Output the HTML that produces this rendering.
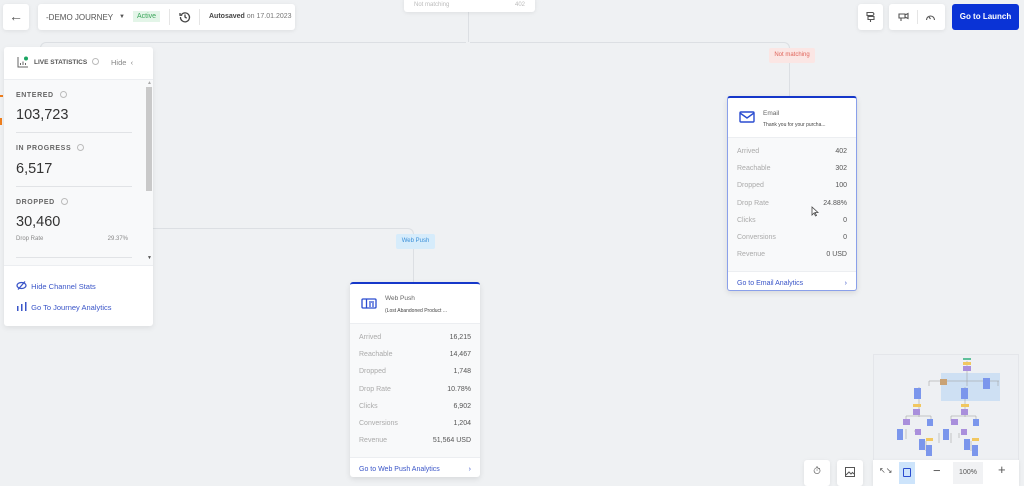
<!DOCTYPE html>
<html><head><meta charset="utf-8"><style>
*{box-sizing:border-box;margin:0;padding:0}
body{width:1024px;height:483px;overflow:hidden;background:#eff1f3;font-family:"Liberation Sans",sans-serif;position:relative;color:#333}
.a{position:absolute}
.w{background:#fff;border-radius:3px;box-shadow:0 1px 4px rgba(0,0,0,.08)}
.ln{position:absolute;border-color:#dcdfe3;border-style:solid;border-width:0}
.card{position:absolute;background:#fff;border-radius:3px;box-shadow:0 2px 6px rgba(0,0,0,.1);border-top:2px solid #1537c9}
.card .hd{height:40px;position:relative;border-bottom:1px solid #eceef1}
.card .rows{background:#f8f9fa;padding:5px 9px 0 9px;border-bottom:1px solid #eceef1}
.card .r{display:flex;justify-content:space-between;height:17.2px;font-size:7px;color:#aaa;align-items:center}
.card .r b{font-weight:normal;color:#555}
.card .ft{height:22px;font-size:7px;color:#3a55c8;padding:0 9px;display:flex;justify-content:space-between;align-items:center}
.lab{position:absolute;left:12px;font-size:7px;font-weight:bold;color:#666;letter-spacing:.6px;white-space:nowrap}
.num{position:absolute;left:12px;font-size:14.5px;color:#333}
.dv{position:absolute;left:12px;width:116px;border-top:1px solid #e1e3e6}
.q{display:inline-block;width:7px;height:7px;border:1px solid #bbb;border-radius:50%;margin-left:6px;vertical-align:-1px}
</style></head><body>

<div class="ln" style="left:40px;top:42px;width:426px;border-top-width:1px;border-left-width:1px;border-radius:6px 0 0 0;height:10px"></div>
<div class="ln" style="left:468px;top:12px;height:30px;border-left-width:1px"></div>
<div class="ln" style="left:470px;top:42px;width:320px;height:54px;border-top-width:1px;border-right-width:1px;border-radius:0 6px 0 0"></div>
<div class="ln" style="left:153px;top:228px;width:261px;height:54px;border-top-width:1px;border-right-width:1px;border-radius:0 6px 0 0"></div>

<div class="a w" style="left:404px;top:-4px;width:131px;height:16px;font-size:6px;color:#bbb;padding:6px 10px">Not matching<span style="float:right">402</span></div>

<div class="a w" style="left:3px;top:4px;width:26px;height:26px;font-size:14px;color:#555;text-align:center;line-height:24px">&#8592;</div>
<div class="a w" style="left:38px;top:4px;width:257px;height:26px;font-size:8px;color:#555">
 <span class="a" style="left:8px;top:9px">-DEMO JOURNEY</span>
 <span class="a" style="left:81px;top:10px;font-size:6px">&#9660;</span>
 <span class="a" style="left:95px;top:7px;background:#e3f5e8;color:#3aa55a;font-size:7px;padding:2px 4px">Active</span>
 <span class="a" style="left:131px;top:5px;height:16px;border-left:1px solid #e5e5e5"></span>
 <svg class="a" style="left:141px;top:7px" width="12" height="12" viewBox="0 0 12 12" fill="none" stroke="#444" stroke-width="1.3"><path d="M2.5 3.5A4.5 4.5 0 1 1 1.5 6"/><path d="M1 2v2.2h2.2"/><path d="M6 3.5V6l1.7 1.2"/></svg>
 <span class="a" style="left:161px;top:5px;height:16px;border-left:1px solid #e5e5e5"></span>
 <span class="a" style="left:171px;top:9px;font-size:7px;color:#444"><b>Autosaved</b> <span style="color:#777">on 17.01.2023</span></span>
</div>

<div class="a w" style="left:858px;top:4px;width:25px;height:26px"><svg class="a" style="left:7px;top:7px" width="11" height="12" viewBox="0 0 11 12" fill="none" stroke="#555" stroke-width="1.1"><path d="M2 1.5h6l1 1.5-1 1.5H2zM3 5.5h6v3H3zM5.5 8.5V11"/></svg></div>
<div class="a w" style="left:889px;top:4px;width:56px;height:26px"><span class="a" style="left:28px;top:6px;height:14px;border-left:1px solid #e5e5e5"></span>
<svg class="a" style="left:9px;top:8px" width="11" height="10" viewBox="0 0 11 10" fill="none" stroke="#555" stroke-width="1.1"><path d="M1 2h6v4H1zM7 3l3-1.5v5L7 5M3 6v3"/></svg>
<svg class="a" style="left:36px;top:8px" width="11" height="10" viewBox="0 0 11 10" fill="none" stroke="#555" stroke-width="1.1"><path d="M1.5 8A4 4 0 1 1 9.5 8M5.5 7l-1.5-2"/></svg></div>
<div class="a" style="left:952px;top:4px;width:67px;height:26px;background:#0a33d6;border-radius:3px;color:#fff;font-size:8px;font-weight:bold;text-align:center;line-height:26px">Go to Launch</div>

<div class="a" style="left:769px;top:48px;width:46px;height:15px;background:#fbe6e4;color:#e0645a;font-size:6px;text-align:center;line-height:15px;border-radius:2px">Not matching</div>
<div class="a" style="left:396px;top:234px;width:39px;height:15px;background:#d6ecfb;color:#3a8fd8;font-size:6px;text-align:center;line-height:15px;border-radius:2px">Web Push</div>

<div class="a" style="left:0;top:95px;width:3px;height:2px;background:#f07f1e"></div>
<div class="a" style="left:0;top:118px;width:2px;height:7px;background:#f07f1e"></div>

<!-- live stats panel -->
<div class="a" style="left:4px;top:47px;width:149px;height:279px;background:#fff;border-radius:3px;box-shadow:0 2px 6px rgba(0,0,0,.08)">
 <svg class="a" style="left:13px;top:9px" width="12" height="12" viewBox="0 0 12 12" fill="none" stroke="#666" stroke-width="1"><path d="M1 1v10h10M3.5 9V7M6 9V5.5M8.5 9V7"/><circle cx="9" cy="2.5" r="2" fill="#1aa562" stroke="none"/></svg>
 <span class="a" style="left:30px;top:12px;font-size:6.5px;font-weight:bold;color:#555;white-space:nowrap">LIVE STATISTICS</span>
 <span class="a" style="left:88px;top:11px;width:7px;height:7px;border:1px solid #bbb;border-radius:50%"></span>
 <span class="a" style="left:107px;top:11px;font-size:7.5px;color:#888;white-space:nowrap">Hide &nbsp;&#8249;</span>
 <div class="a" style="left:0;top:32px;width:149px;height:187px;background:#f8f9fa;border-top:1px solid #eceef1;border-bottom:1px solid #eceef1"></div>
 <div class="a" style="left:142px;top:40px;width:6px;height:104px;background:#c9c9c9"></div>
 <div class="a" style="left:143px;top:208px;font-size:5px;color:#555">&#9660;</div>
 <div class="a" style="left:143px;top:33px;font-size:5px;color:#aaa">&#9650;</div>
 <div class="lab" style="top:44px">ENTERED<span class="q"></span></div>
 <div class="num" style="top:60px">103,723</div>
 <div class="dv" style="top:85px"></div>
 <div class="lab" style="top:97px">IN PROGRESS<span class="q"></span></div>
 <div class="num" style="top:114px">6,517</div>
 <div class="dv" style="top:139px"></div>
 <div class="lab" style="top:151px">DROPPED<span class="q"></span></div>
 <div class="num" style="top:167px">30,460</div>
 <div class="a" style="left:12px;top:189px;font-size:6px;color:#888;width:112px;display:flex;justify-content:space-between">Drop Rate<span>29.37%</span></div>
 <div class="dv" style="top:210px"></div>
 <div class="a" style="left:12px;top:234px;font-size:7.5px;color:#3a55c8;white-space:nowrap"><svg width="11" height="9" viewBox="0 0 11 9" fill="none" stroke="#3a55c8" stroke-width="1.3" style="vertical-align:-1px"><ellipse cx="5.5" cy="4.5" rx="4.5" ry="3"/><path d="M2 8.5L9 .5"/></svg> &nbsp;Hide Channel Stats</div>
 <div class="a" style="left:12px;top:255px;font-size:7.5px;color:#3a55c8;white-space:nowrap"><svg width="11" height="9" viewBox="0 0 11 9" fill="#3a55c8" style="vertical-align:-1px"><rect x="1" y="4" width="1.5" height="5"/><rect x="5" y="2" width="1.5" height="7"/><rect x="9" y="0" width="1.5" height="9"/></svg> &nbsp;Go To Journey Analytics</div>
</div>

<!-- email card -->
<div class="card" style="left:727px;top:96px;width:130px;height:195px;border:1px solid #8aa0ea;border-top:2px solid #1537c9">
 <div class="hd">
  <svg class="a" style="left:11px;top:13px" width="16" height="12" viewBox="0 0 16 12" fill="none" stroke="#2a4cd0" stroke-width="1.4"><rect x="1" y="1" width="14" height="10" rx="1"/><path d="M1 2l7 5 7-5"/></svg>
  <span class="a" style="left:35px;top:12px;font-size:6.5px;color:#666">Email</span>
  <span class="a" style="left:35px;top:24px;font-size:5px;color:#444;white-space:nowrap">Thank you for your purcha...</span>
 </div>
 <div class="rows" style="height:134px">
  <div class="r">Arrived<b>402</b></div><div class="r">Reachable<b>302</b></div><div class="r">Dropped<b>100</b></div><div class="r">Drop Rate<b>24.88%</b></div><div class="r">Clicks<b>0</b></div><div class="r">Conversions<b>0</b></div><div class="r">Revenue<b>0 USD</b></div>
 </div>
 <div class="ft">Go to Email Analytics<span>&#8250;</span></div>
</div>
<svg class="a" style="left:811px;top:206px" width="8" height="11" viewBox="0 0 8 11"><path d="M1 1v8l2-2 1.5 3 1-.5L4 6.5h3z" fill="#fff" stroke="#444" stroke-width=".8"/></svg>

<!-- web push card -->
<div class="card" style="left:350px;top:282px;width:130px;height:195px">
 <div class="hd">
  <svg class="a" style="left:11px;top:14px" width="16" height="11" viewBox="0 0 16 11" fill="none" stroke="#2a4cd0" stroke-width="1.3"><rect x="1" y="1" width="14" height="9" rx="1"/><path d="M5.5 1v9M8 4h5M8 6h2M11 6h2M8 8h2M11 8h2"/></svg>
  <span class="a" style="left:35px;top:11px;font-size:6.5px;color:#666">Web Push</span>
  <span class="a" style="left:35px;top:24px;font-size:5px;color:#444;white-space:nowrap">(Lost Abandoned Product ...</span>
 </div>
 <div class="rows" style="height:134px">
  <div class="r">Arrived<b>16,215</b></div><div class="r">Reachable<b>14,467</b></div><div class="r">Dropped<b>1,748</b></div><div class="r">Drop Rate<b>10.78%</b></div><div class="r">Clicks<b>6,902</b></div><div class="r">Conversions<b>1,204</b></div><div class="r">Revenue<b>51,564 USD</b></div>
 </div>
 <div class="ft">Go to Web Push Analytics<span>&#8250;</span></div>
</div>

<!-- minimap -->
<div class="a" style="left:873px;top:354px;width:146px;height:107px;background:#eef0f3;border:1px solid #e4e6ea">
 <svg width="146" height="107" viewBox="873 354 146 107">
  <rect x="940" y="372" width="59" height="28" fill="#c6dcf3" opacity=".8"/>
  <g stroke="#999" stroke-width=".5" fill="none">
   <path d="M966 360v20M928 380h70M928 380v5M966 380v5M997 380v5M918 386v30M964 386v30M905 415h25M950 415h25M905 415v5M930 415v5M950 415v5M975 415v5M905 428v10M913 430h5M938 432v10M950 432v10M958 432v5M925 440v10M970 440v10"/>
  </g>
  <rect x="962" y="357" width="8" height="2" fill="#5fc09a"/>
  <rect x="962" y="361" width="8" height="3" fill="#f1c760"/>
  <rect x="962" y="365" width="8" height="5" fill="#a98fdc"/>
  <rect x="939" y="378" width="7" height="6" fill="#c9a275"/>
  <rect x="982" y="377" width="7" height="11" fill="#7b96ec"/>
  <rect x="913" y="387" width="7" height="11" fill="#7b96ec"/>
  <rect x="960" y="387" width="7" height="11" fill="#7b96ec"/>
  <rect x="912" y="403" width="8" height="3" fill="#f1c760"/><rect x="960" y="403" width="8" height="3" fill="#f1c760"/>
  <rect x="912" y="408" width="7" height="6" fill="#a98fdc"/><rect x="960" y="408" width="7" height="6" fill="#a98fdc"/>
  <rect x="902" y="418" width="7" height="6" fill="#a98fdc"/><rect x="926" y="418" width="6" height="7" fill="#7b96ec"/>
  <rect x="950" y="418" width="7" height="6" fill="#a98fdc"/><rect x="972" y="418" width="6" height="7" fill="#7b96ec"/>
  <rect x="896" y="428" width="6" height="11" fill="#7b96ec"/><rect x="914" y="428" width="6" height="6" fill="#a98fdc"/>
  <rect x="942" y="428" width="6" height="11" fill="#7b96ec"/><rect x="960" y="428" width="6" height="6" fill="#a98fdc"/>
  <rect x="918" y="438" width="6" height="11" fill="#7b96ec"/><rect x="925" y="437" width="7" height="3" fill="#f1c760"/>
  <rect x="963" y="438" width="6" height="11" fill="#7b96ec"/><rect x="971" y="437" width="7" height="3" fill="#f1c760"/>
  <rect x="925" y="444" width="6" height="11" fill="#7b96ec"/><rect x="971" y="444" width="6" height="11" fill="#7b96ec"/>
 </svg>
</div>
<div class="a w" style="left:804px;top:460px;width:26px;height:26px;font-size:10px;text-align:center;line-height:24px;color:#444">&#9201;</div>
<div class="a w" style="left:837px;top:460px;width:26px;height:26px"><svg class="a" style="left:8px;top:7px" width="10" height="10" viewBox="0 0 10 10" fill="none" stroke="#555"><rect x=".5" y=".5" width="9" height="9"/><path d="M1 8l3-3 2 2 1.5-1.5L9 7"/></svg></div>
<div class="a w" style="left:873px;top:460px;width:146px;height:26px;border-radius:0">
 <span class="a" style="left:6px;top:6px;font-size:8px;color:#555">&#8598;&#8600;</span>
 <div class="a" style="left:26px;top:2px;width:16px;height:22px;background:#cde4fb"></div>
 <div class="a" style="left:30px;top:8px;width:8px;height:9px;border:1px solid #2a4cd0;border-radius:1px"></div>
 <span class="a" style="left:60px;top:3px;font-size:13px;color:#555">&#8722;</span>
 <div class="a" style="left:80px;top:2px;width:30px;height:22px;background:#f1f2f4;font-size:7px;color:#555;text-align:center;line-height:22px">100%</div>
 <span class="a" style="left:125px;top:2px;font-size:13px;color:#555">+</span>
</div>
</body></html>
